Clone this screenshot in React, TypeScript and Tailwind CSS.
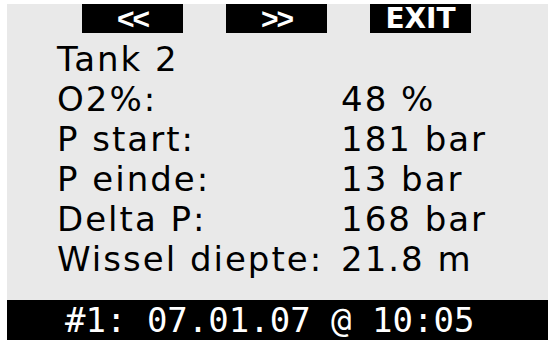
import React from 'react'

function App() {
  const rows = [
    { label: 'Tank 2', value: '' },
    { label: 'O2%:', value: '48 %' },
    { label: 'P start:', value: '181 bar' },
    { label: 'P einde:', value: '13 bar' },
    { label: 'Delta P:', value: '168 bar' },
    { label: 'Wissel diepte:', value: '21.8 m' },
  ]

  const buttons = ['<<', '>>', 'EXIT']

  return (
    <div className="w-[548px] h-[340px] bg-white pl-[7px] pt-[4px] overflow-hidden">
      <div className="h-full bg-[#e9e9e9] flex flex-col">
        {/* soft keys */}
        <div className="flex pl-[75px] gap-[43px]">
          {buttons.map((b) => (
            <div
              key={b}
              className="w-[101px] h-[29px] bg-black text-white flex items-center justify-center text-[28px] leading-none font-['DejaVu_Sans',sans-serif]"
            >
              {b === 'EXIT' ? (
                <span className="font-bold">{b}</span>
              ) : (
                <span className="font-bold font-['Liberation_Sans',sans-serif] text-[30px] tracking-[-2px]">{b}</span>
              )}
            </div>
          ))}
        </div>

        {/* values */}
        <div className="mt-[6px] pl-[50px] grid grid-cols-[284px_1fr] text-[34px] leading-[40px] tracking-[2px] text-black font-['DejaVu_Sans',sans-serif]">
          {rows.map((r) => (
            <React.Fragment key={r.label}>
              <div className="whitespace-pre">{r.label}</div>
              <div className="whitespace-pre">{r.value}</div>
            </React.Fragment>
          ))}
        </div>

        {/* dive log line */}
        <div className="mt-auto h-[40px] bg-black text-white flex items-center pl-[58px]">
          <span className="text-[34px] leading-[38px] tracking-[0px] font-['DejaVu_Sans_Mono',monospace]">
            #1: 07.01.07 @ 10:05
          </span>
        </div>
      </div>
    </div>
  )
}

export default App
